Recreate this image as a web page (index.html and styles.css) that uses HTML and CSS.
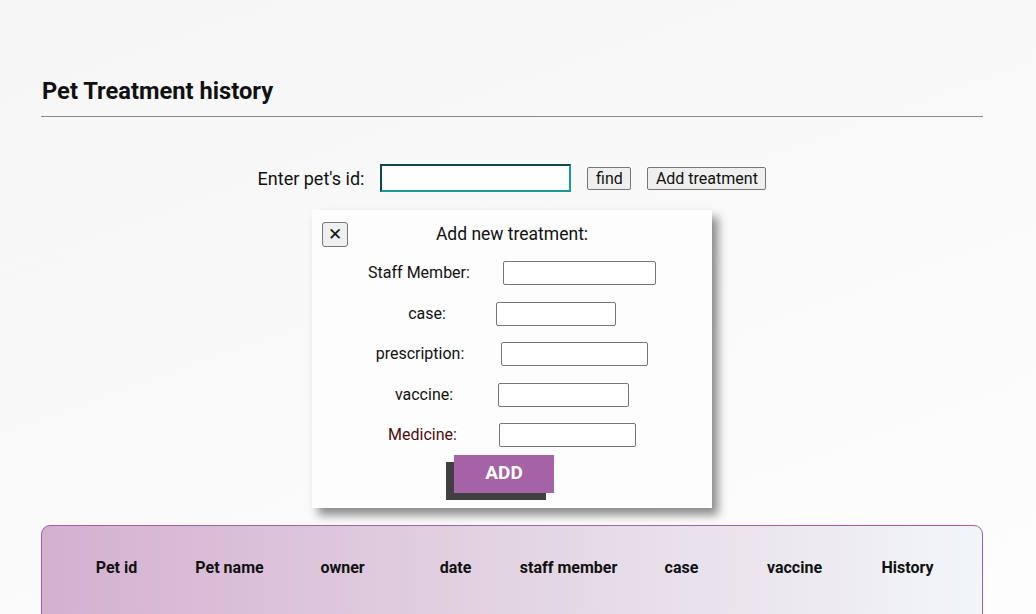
FILE: index.html
```html
<!DOCTYPE html>
<html>
<head>
<meta charset="utf-8">
<link rel="stylesheet" href="styles.css">
</head>
<body>
<div class="page">
  <h2 class="title">Pet Treatment history</h2>
  <hr class="rule">
  <div class="search">
    <label class="search-label">Enter pet's id:</label>
    <input class="search-input" type="text">
    <button class="btn btn-find">find</button>
    <button class="btn btn-add">Add treatment</button>
  </div>
  <div class="modal">
    <div class="modal-head">
      <button class="close">&#x2715;</button>
      <div class="modal-title">Add new treatment:</div>
      <span></span>
    </div>
    <div class="row r1"><label>Staff Member:</label><input type="text"></div>
    <div class="row r2"><label>case:</label><input type="text"></div>
    <div class="row r3"><label>prescription:</label><input type="text"></div>
    <div class="row r4"><label>vaccine:</label><input type="text"></div>
    <div class="row r5"><label class="red">Medicine:</label><input type="text"></div>
    <div class="add-wrap"><button class="add">ADD</button></div>
  </div>
  <div class="card">
    <table class="table">
      <thead>
        <tr>
          <th>Pet id</th><th>Pet name</th><th>owner</th><th>date</th><th>staff member</th><th>case</th><th>vaccine</th><th>History</th>
        </tr>
      </thead>
    </table>
  </div>
</div>
</body>
</html>
```

FILE: styles.css
```css
html, body {
  margin: 0;
  padding: 0;
}
body {
  font-family: Roboto, "Liberation Sans", sans-serif;
  color: #111;
  background: linear-gradient(160deg, #f6f6f6 0%, #fafafa 60%, #fdfdfd 100%);
  height: 614px;
  overflow: hidden;
}
.page {
  padding: 0 53px 0 41px;
}
.title {
  font-size: 23.7px;
  font-weight: 700;
  margin: 0;
  padding: 77px 0 0 1px;
  line-height: 29px;
}
.rule {
  border: 0;
  border-top: 1px solid #8a8a8a;
  margin: 10px 0 0 0;
}
.search {
  display: flex;
  align-items: center;
  justify-content: center;
  gap: 16px;
  margin-top: 47px;
  height: 28px;
}
.search-label {
  font-size: 18px;
}
.search-input {
  width: 187px;
  height: 24px;
  box-sizing: content-box;
  padding: 0;
  border: 2px solid;
  border-color: #0d4b49 #1a9a94 #1a9a94 #0d4b49;
  background: #fff;
}
.btn {
  font-family: inherit;
  font-size: 16px;
  height: 23px;
  padding: 0;
  background: #efefef;
  border: 1px solid #767676;
  border-radius: 2px;
  color: #111;
}
.btn-find { width: 44px; }
.btn-add { width: 119px; }
.modal {
  width: 400px;
  height: 298px;
  margin: 18px 0 0 271px;
  background: #fdfdfd;
  box-shadow: 6px 7px 9px rgba(0,0,0,0.45);
  box-sizing: border-box;
  padding-top: 12px;
}
.modal-head {
  display: grid;
  grid-template-columns: 1fr auto 1fr;
  align-items: center;
  padding: 0 10px;
  height: 25px;
}
.close {
  justify-self: start;
  width: 26px;
  height: 25px;
  padding: 0;
  font-size: 17px;
  font-weight: 700;
  background: #efefef;
  border: 1px solid #767676;
  border-radius: 3px;
  color: #111;
  font-family: "DejaVu Sans", sans-serif;
  line-height: 1;
}
.modal-title {
  font-size: 17.5px;
  margin-top: -2px;
}
.row {
  display: flex;
  align-items: center;
  justify-content: center;
  height: 24px;
  font-size: 16px;
}
.row label {
  margin-top: -2px;
}
.row input {
  height: 24px;
  box-sizing: border-box;
  border: 1px solid #767676;
  border-radius: 2px;
  background: #fff;
  padding: 0;
}
.r1 { margin-top: 14px; }
.r1 input { width: 153px; margin-left: 33px; }
.r2 { margin-top: 17px; }
.r2 input { width: 120px; margin-left: 50px; }
.r3 { margin-top: 16px; }
.r3 input { width: 147px; margin-left: 37px; }
.r4 { margin-top: 17px; }
.r4 input { width: 131px; margin-left: 45px; }
.r5 { margin-top: 16px; }
.r5 input { width: 137px; margin-left: 42px; }
.red { color: #4a0d0d; }
.add-wrap {
  margin-top: 8px;
  padding-left: 142px;
}
.add {
  width: 100px;
  height: 38px;
  border: 0;
  background: #a563a5;
  color: #fff;
  font-family: inherit;
  font-size: 19px;
  font-weight: 700;
  box-shadow: -8px 7px 0 #404040;
  padding: 0 0 4px 0;
}
.card {
  margin-top: 17px;
  width: 942px;
  height: 120px;
  box-sizing: border-box;
  border: 1px solid #a55fa8;
  border-radius: 9px;
  background: linear-gradient(90deg, #d4b0d0 0%, #e3d4e3 50%, #f2f6f8 100%);
  padding: 0 18px;
}
.table {
  width: 904px;
  border-collapse: collapse;
  table-layout: fixed;
  margin-top: 30px;
}
.table th {
  font-size: 16px;
  font-weight: 700;
  height: 23px;
  padding: 0;
  text-align: center;
}
```
